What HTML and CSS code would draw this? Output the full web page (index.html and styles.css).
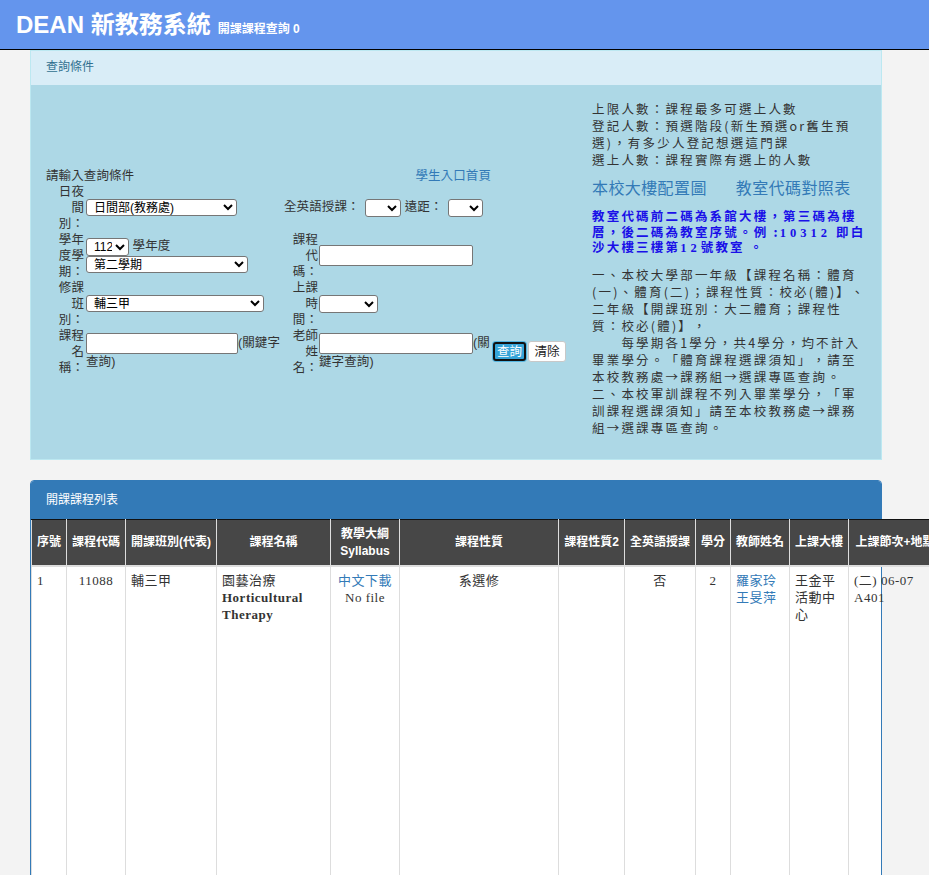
FILE: index.html
```html
<!DOCTYPE html>
<html lang="zh-Hant">
<head>
<meta charset="utf-8">
<title>DEAN 新教務系統 - 開課課程查詢</title>
<link rel="stylesheet" href="styles.css">
</head>
<body>
<header class="topbar"><span class="brand">DEAN 新教務系統</span><span class="subtitle">開課課程查詢 0</span></header>
<main class="container">
  <section class="panel panel-info">
    <div class="panel-heading">查詢條件</div>
    <div class="query-body">
      <form class="query-form">
        <div class="qf-title">請輸入查詢條件</div>
        <a class="qf-home" href="#">學生入口首頁</a>

        <div class="lbl c1 r2">日夜間別：</div>
        <div class="fld c2 r2"><select class="sel w-dept"><option>日間部(教務處)</option></select></div>
        <div class="fld fld-wide r2">全英語授課： <select class="sel sel-gap w-eng"><option></option></select> 遠距： <select class="sel sel-gap w-remote"><option></option></select></div>

        <div class="lbl c1 r3">學年度學期：</div>
        <div class="fld c2 r3"><select class="sel w-year"><option>112</option></select> 學年度<br><select class="sel w-term"><option>第二學期</option></select></div>
        <div class="lbl c3 r3">課程代碼：</div>
        <div class="fld fld-r c4 r3"><input class="txt w-code" type="text"></div>

        <div class="lbl c1 r4">修課班別：</div>
        <div class="fld c2 r4"><select class="sel w-class"><option>輔三甲</option></select></div>
        <div class="lbl c3 r4">上課時間：</div>
        <div class="fld fld-r c4 r4"><select class="sel w-time"><option></option></select></div>

        <div class="lbl c1 r5">課程名稱：</div>
        <div class="fld c2 r5"><input class="txt w-name" type="text">(關鍵字查詢)</div>
        <div class="lbl c3 r5">老師姓名：</div>
        <div class="fld fld-r c4 r5"><input class="txt w-code" type="text">(關鍵字查詢)</div>
        <div class="fld-btns r5"><button type="button" class="btn btn-go">查詢</button><button type="button" class="btn btn-clear">清除</button></div>
      </form>

      <div class="info">
        <div class="info-notes">上限人數：課程最多可選上人數<br>登記人數：預選階段(新生預選or舊生預<br>選)，有多少人登記想選這門課<br>選上人數：課程實際有選上的人數</div>
        <div class="info-links"><a href="#">本校大樓配置圖</a><a href="#">教室代碼對照表</a></div>
        <div class="info-code">教室代碼前二碼為系館大樓，第三碼為樓<br>層，後二碼為教室序號。例 :<span class="num">10312</span> 即白<br>沙大樓三樓第<span class="num">12</span>號教室 。</div>
        <div class="info-rules">一、本校大學部一年級【課程名稱：體育<br>(一)、體育(二)；課程性質：校必(體)】、<br>二年級【開課班別：大二體育；課程性<br>質：校必(體)】，<br>　　每學期各1學分，共4學分，均不計入<br>畢業學分。「體育課程選課須知」，請至<br>本校教務處→課務組→選課專區查詢。<br>二、本校軍訓課程不列入畢業學分，「軍<br>訓課程選課須知」請至本校教務處→課務<br>組→選課專區查詢。</div>
      </div>
    </div>
  </section>

  <section class="panel panel-primary">
    <div class="panel-heading">開課課程列表</div>
    <table class="course-table">
      <colgroup>
        <col class="cw-seq"><col class="cw-code"><col class="cw-class"><col class="cw-name"><col class="cw-syl"><col class="cw-type"><col class="cw-type2"><col class="cw-eng"><col class="cw-credit"><col class="cw-teacher"><col class="cw-bldg"><col class="cw-time"><col class="cw-count"><col class="cw-count"><col class="cw-count"><col class="cw-count">
      </colgroup>
      <thead>
        <tr>
          <th>序號</th><th>課程代碼</th><th>開課班別(代表)</th><th>課程名稱</th><th>教學大綱 Syllabus</th><th>課程性質</th><th>課程性質2</th><th>全英語授課</th><th>學分</th><th>教師姓名</th><th>上課大樓</th><th class="nowrap">上課節次+地點</th><th>上限人數</th><th>登記人數</th><th>選上人數</th><th>備註</th>
        </tr>
      </thead>
      <tbody>
        <tr class="course-row">
          <td>1</td>
          <td class="c">11088</td>
          <td>輔三甲</td>
          <td>園藝治療<br><b class="en">Horticultural Therapy</b></td>
          <td class="c"><a href="#">中文下載</a><br>No file</td>
          <td class="c">系選修</td>
          <td></td>
          <td class="c">否</td>
          <td class="c">2</td>
          <td><a href="#">羅家玲</a><br><a href="#">王旻萍</a></td>
          <td>王金平活動中心</td>
          <td class="nowrap">(二) 06-07<br>A401</td>
          <td></td><td></td><td></td><td></td>
        </tr>
      </tbody>
    </table>
  </section>
</main>
</body>
</html>
```

FILE: styles.css
```css
html {
  background: #f3f3f3;
}

body {
  margin: 0;
  background: #f3f3f3;
  color: #333;
  font-family: "Liberation Sans", "Noto Sans CJK TC", sans-serif;
  font-size: 13px;
  text-spacing-trim: space-all;
}

a {
  color: #337ab7;
  text-decoration: none;
}

/* ---------- top bar ---------- */
.topbar {
  height: 49px;
  line-height: 49px;
  background: #6495ed;
  border-bottom: 1px solid #000;
  color: #fff;
  font-weight: bold;
  padding-left: 16px;
  white-space: nowrap;
  overflow: hidden;
}

.brand {
  font-size: 24px;
}

.subtitle {
  font-size: 12px;
  margin-left: 7px;
}

/* ---------- layout ---------- */
.container {
  width: 852px;
  margin: 0 0 0 30px;
}

.panel {
  border: 1px solid transparent;
  margin-bottom: 20px;
  background: #fff;
}

.panel-info {
  border-color: #bce8f1;
}

.panel-info > .panel-heading {
  background: #d9edf7;
  color: #31708f;
  font-size: 12px;
  line-height: 17px;
  padding: 8px 15px 9px;
}

.panel-primary {
  border-color: #337ab7;
  border-radius: 4px;
}

.panel-primary > .panel-heading {
  background: #337ab7;
  color: #fff;
  font-size: 12px;
  line-height: 18px;
  padding: 10px 15px;
  border-radius: 3px 3px 0 0;
}

/* ---------- query area ---------- */
.query-body {
  background: #add8e6;
  padding: 15px;
  display: flex;
  align-items: center;
}

.query-form {
  flex: 1;
  display: grid;
  grid-template-columns: 38px 199px 35px 173px auto;
  grid-template-rows: 16px repeat(4, 48px);
  font-size: 12.5px;
  letter-spacing: 0.1px;
  line-height: 16px;
  color: #333;
}

.qf-title {
  grid-column: 1 / 3;
  grid-row: 1;
  white-space: nowrap;
}

.qf-home {
  grid-column: 4;
  grid-row: 1;
  justify-self: end;
  white-space: nowrap;
}

.c1 { grid-column: 1; }
.c2 { grid-column: 2; }
.c3 { grid-column: 3; }
.c4 { grid-column: 4; }
.r2 { grid-row: 2; }
.r3 { grid-row: 3; }
.r4 { grid-row: 4; }
.r5 { grid-row: 5; }

.lbl {
  width: 27px;
  justify-self: end;
  align-self: center;
  text-align: right;
  line-break: strict;
}

.fld {
  align-self: center;
  padding-left: 2px;
}

.fld-r {
  padding-left: 1px;
}

.fld-wide {
  grid-column: 3 / 5;
  padding-left: 1px;
  white-space: nowrap;
}

.fld-btns {
  grid-column: 5;
  align-self: center;
  padding-left: 1px;
  display: flex;
  align-items: center;
}

.sel {
  font: 12px "Liberation Sans", "Noto Sans CJK TC", sans-serif;
  height: 18px;
  padding: 0 0 0 3px;
  border: 1px solid #767676;
  border-radius: 3px;
  background: #fff;
  color: #000;
  vertical-align: middle;
  box-sizing: border-box;
  margin: 0;
}

.sel-gap {
  margin-left: 2px;
}

.w-dept { width: 151px; height: 17px; }
.w-year { width: 43px; }
.w-term { width: 162px; height: 17px; }
.w-class { width: 178px; height: 17px; }
.w-eng { width: 36px; }
.w-remote { width: 35px; }
.w-time { width: 59px; }

.txt {
  height: 21px;
  box-sizing: border-box;
  border: 1px solid #767676;
  border-radius: 2px;
  background: #fff;
  padding: 1px 2px;
  margin: 0;
  vertical-align: middle;
  font: 12px "Liberation Sans", sans-serif;
}

.w-code { width: 154px; }
.w-name { width: 152px; }

.btn {
  font: 12.5px "Liberation Sans", "Noto Sans CJK TC", sans-serif;
  padding: 0;
  border-radius: 3px;
  box-sizing: border-box;
  line-height: 1;
}

.btn-go {
  width: 33px;
  height: 19px;
  margin: 1px;
  border: 2px solid #111;
  background: #36a4d8;
  color: #fff;
  box-shadow: 0 0 0 1px #55b6e2;
}

.btn-clear {
  width: 38px;
  height: 21px;
  margin-left: 1px;
  border: 1px solid #c8c8c8;
  background: #fff;
  color: #222;
}

/* ---------- info column ---------- */
.info {
  width: 274px;
  align-self: flex-start;
  padding-bottom: 8px;
  font-family: "Noto Sans CJK TC", sans-serif;
  font-size: 12.5px;
  letter-spacing: 2.2px;
  color: #333;
  white-space: nowrap;
}

.info-notes {
  line-height: 17px;
}

.info-links {
  margin-top: 9px;
  font-size: 16px;
  letter-spacing: 0.4px;
  line-height: 20px;
}

.info-links a + a {
  margin-left: 29px;
}

.info-code {
  margin-top: 11px;
  line-height: 15.5px;
  font-weight: bold;
  color: #1a10e8;
}

.info-code .num {
  font-family: "Liberation Serif", serif;
  letter-spacing: 4px;
  line-height: 0;
}

.info-rules {
  margin-top: 11px;
  line-height: 17px;
}

/* ---------- course table ---------- */
.course-table {
  border-collapse: collapse;
  table-layout: fixed;
  width: 1202px;
  font-family: "Liberation Serif", "Noto Sans CJK TC", serif;
  font-size: 13px;
  letter-spacing: 0.5px;
  color: #333;
}

.cw-seq { width: 35px; }
.cw-code { width: 59px; }
.cw-class { width: 91px; }
.cw-name { width: 114px; }
.cw-syl { width: 69px; }
.cw-type { width: 159px; }
.cw-type2 { width: 66px; }
.cw-eng { width: 71px; }
.cw-credit { width: 35px; }
.cw-teacher { width: 59px; }
.cw-bldg { width: 59px; }
.cw-time { width: 93px; }
.cw-count { width: 73px; }

.course-table th {
  background: #474747;
  color: #fff;
  font-family: "Liberation Sans", "Noto Sans CJK TC", sans-serif;
  font-size: 12px;
  font-weight: bold;
  letter-spacing: 0;
  line-height: 17px;
  padding: 6px 5px 5px;
  text-align: center;
  vertical-align: middle;
  border: 1px solid #ddd;
  border-top: 1px solid #111;
  border-bottom: 2px solid #ddd;
}

.course-table td {
  border: 1px solid #ddd;
  padding: 5px;
  line-height: 17px;
  vertical-align: top;
  text-align: left;
}

.course-table td.c {
  text-align: center;
}

.nowrap {
  white-space: nowrap;
}

.en {
  font-weight: bold;
}

.course-row {
  height: 16650px;
}
```
